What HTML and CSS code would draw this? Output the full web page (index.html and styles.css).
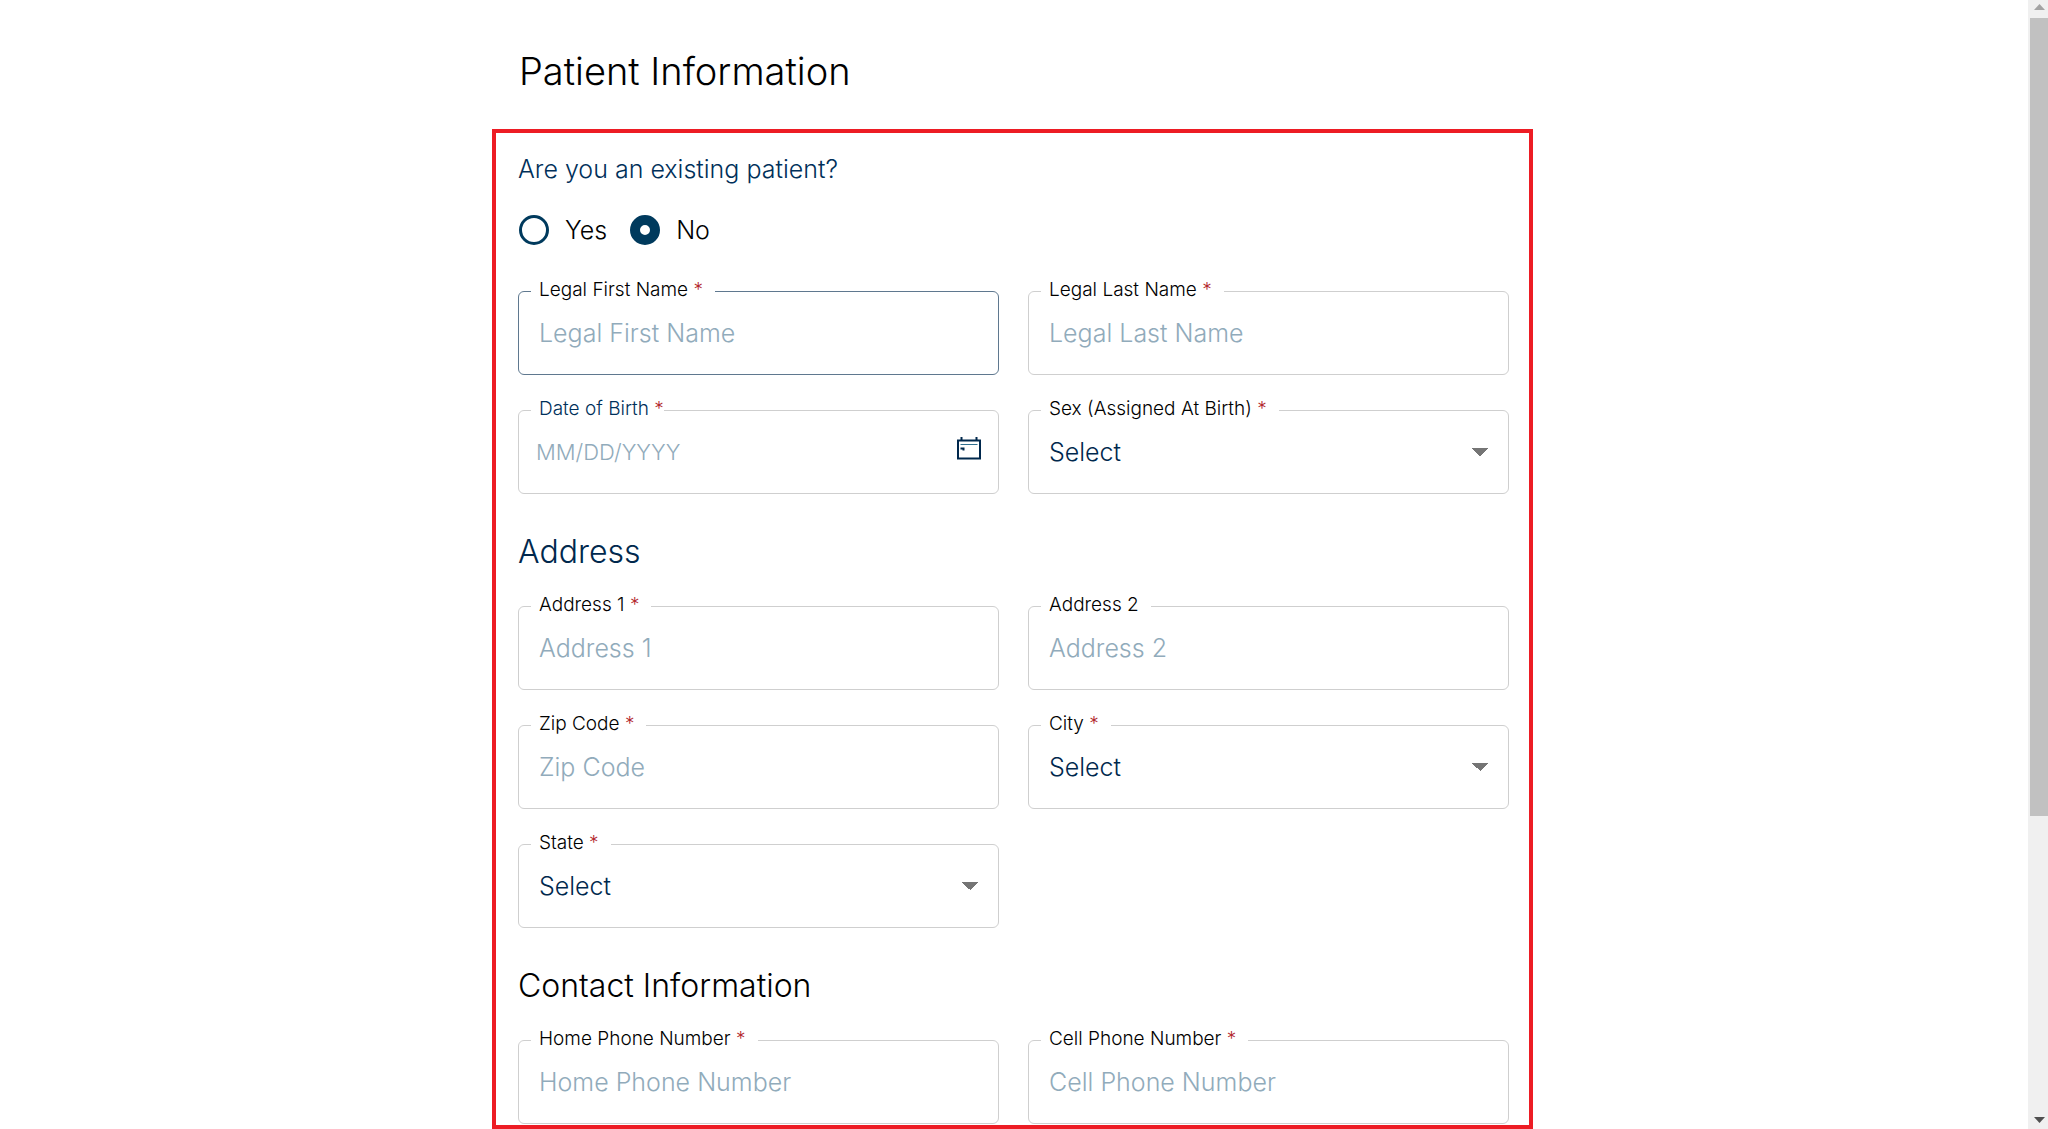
FILE: index.html
```html
<!DOCTYPE html>
<html lang="en">
<head>
<meta charset="utf-8">
<title>Patient Information</title>
<link rel="stylesheet" href="styles.css">
</head>
<body>
<div class="layout">
<main class="page">
  <h1 class="page-title">Patient Information</h1>
  <form class="panel">
    <p class="question" id="existing">Are you an existing patient?</p>
    <div class="choices" role="radiogroup" aria-labelledby="existing">
      <label class="choice"><input class="radio" type="radio" name="existing" value="yes">Yes</label>
      <label class="choice"><input class="radio" type="radio" name="existing" value="no" checked>No</label>
    </div>
    <div class="fields">
      <fieldset class="field field-hover"><legend class="legend"><label for="first">Legal First Name <span class="req">*</span></label></legend><input class="control" id="first" type="text" placeholder="Legal First Name"></fieldset>
      <fieldset class="field"><legend class="legend"><label for="last">Legal Last Name <span class="req">*</span></label></legend><input class="control" id="last" type="text" placeholder="Legal Last Name"></fieldset>
      <fieldset class="field field-date"><legend class="legend"><label for="dob">Date of Birth <span class="req">*</span></label></legend>
        <div class="date-row"><input class="control" id="dob" type="text" placeholder="MM/DD/YYYY"><button class="calendar" type="button" aria-label="Choose date"><svg width="26" height="24" viewBox="0 0 26 24" fill="none" stroke="#00284d"><path d="M2 4.500h22v18H2z" stroke-width="2"/><path d="M5.500 1v3M20.500 1v3" stroke-width="2"/><path d="M4.500 8.500h17" stroke="#2f6f8f"/><path d="M4.500 12.500h3v2" stroke-width="2"/></svg></button></div></fieldset>
      <fieldset class="field"><legend class="legend"><label for="sex">Sex (Assigned At Birth) <span class="req">*</span></label></legend><select class="control" id="sex"><option>Select</option></select></fieldset>
    </div>
    <h2 class="section section-navy">Address</h2>
    <div class="fields">
      <fieldset class="field"><legend class="legend"><label for="address1">Address 1 <span class="req">*</span></label></legend><input class="control" id="address1" type="text" placeholder="Address 1"></fieldset>
      <fieldset class="field"><legend class="legend"><label for="address2">Address 2</label></legend><input class="control" id="address2" type="text" placeholder="Address 2"></fieldset>
      <fieldset class="field"><legend class="legend"><label for="zip">Zip Code <span class="req">*</span></label></legend><input class="control" id="zip" type="text" placeholder="Zip Code"></fieldset>
      <fieldset class="field"><legend class="legend"><label for="city">City <span class="req">*</span></label></legend><select class="control" id="city"><option>Select</option></select></fieldset>
      <fieldset class="field"><legend class="legend"><label for="state">State <span class="req">*</span></label></legend><select class="control" id="state"><option>Select</option></select></fieldset>
    </div>
    <h2 class="section">Contact Information</h2>
    <div class="fields">
      <fieldset class="field"><legend class="legend"><label for="home">Home Phone Number <span class="req">*</span></label></legend><input class="control" id="home" type="tel" placeholder="Home Phone Number"></fieldset>
      <fieldset class="field"><legend class="legend"><label for="cell">Cell Phone Number <span class="req">*</span></label></legend><input class="control" id="cell" type="tel" placeholder="Cell Phone Number"></fieldset>
    </div>
  </form>
</main>
<div class="scrollbar" aria-hidden="true">
  <svg class="arrow" viewBox="0 0 20 18" fill="#a3a3a3"><path d="M6 10l5.500-6 5.500 6z"/></svg>
  <div class="track"><div class="thumb"></div></div>
  <svg class="arrow" viewBox="0 0 20 18" fill="#505050"><path d="M6 6l5.500 6 5.500-6z"/></svg>
</div>
</div>
</body>
</html>
```
FILE: styles.css
```css
* { box-sizing: border-box; }
html { scrollbar-width: none; }
body { margin: 0; background: #fff; color: #000; font: 300 25px/30px Inter, "Liberation Sans", sans-serif; }
.layout { display: flex; }
.page { flex: 1; padding: 0 3px 0 0; }
.page-title { max-width: 1041px; margin: 0 auto; padding: 49px 27px 36px; font-weight: 300; font-size: 38px; line-height: 44px; }
.panel { max-width: 1041px; margin: 0 auto; padding: 20px 20px 1px 22px; border: 4px solid #ed1c24; }
.question { margin: 0; line-height: 32px; color: #00305a; }
.choices { display: flex; gap: 22px; margin: 29px 0 33px; }
.choice { display: flex; align-items: center; gap: 16px; line-height: 32px; }
.radio { appearance: none; width: 30px; height: 30px; margin: 0 0 0 1px; border: 3px solid #003a5d; border-radius: 50%; }
.radio:checked { border-width: 10px; }
.fields { display: grid; grid-template-columns: 1fr 1fr; gap: 23px 29px; }
.field { min-width: 0; margin: 0; padding: 0 0 12px; border: 1px solid #cfcfcf; border-radius: 6px; }
.field-hover { border-color: #5f788f; }
.legend { margin-left: 12px; padding: 0 12px 4px 8px; font-size: 19px; line-height: 21px; }
.req { color: #b3282d; }
.control { display: block; width: 100%; height: 58px; padding: 0 20px; border: 0; outline: 0; background: transparent; color: #00284d; font: inherit; }
.control::placeholder { color: #91abbb; opacity: 1; }
select.control { appearance: none; background: conic-gradient(from -45deg at 50% 100%, #757575 90deg, transparent 0) right 20px center / 16px 8px no-repeat; }
.field-date .legend { padding-right: 0; color: #00305a; }
.date-row { display: flex; align-items: center; }
.date-row .control { flex: 1; min-width: 0; padding-left: 17px; font-size: 22px; }
.calendar { display: flex; margin: 0 16px 8px 0; padding: 0; border: 0; background: none; }
.section { margin: 38px 0 22px; font-weight: 300; font-size: 32px; line-height: 40px; }
.section-navy { color: #00284d; }
.scrollbar { position: sticky; top: 0; display: flex; flex-direction: column; width: 20px; height: 100vh; background: #f0f0f0; }
.arrow { display: block; width: 20px; height: 18px; }
.track { flex: 1; }
.thumb { height: 73%; margin-left: 2px; background: #c1c1c1; }
```
